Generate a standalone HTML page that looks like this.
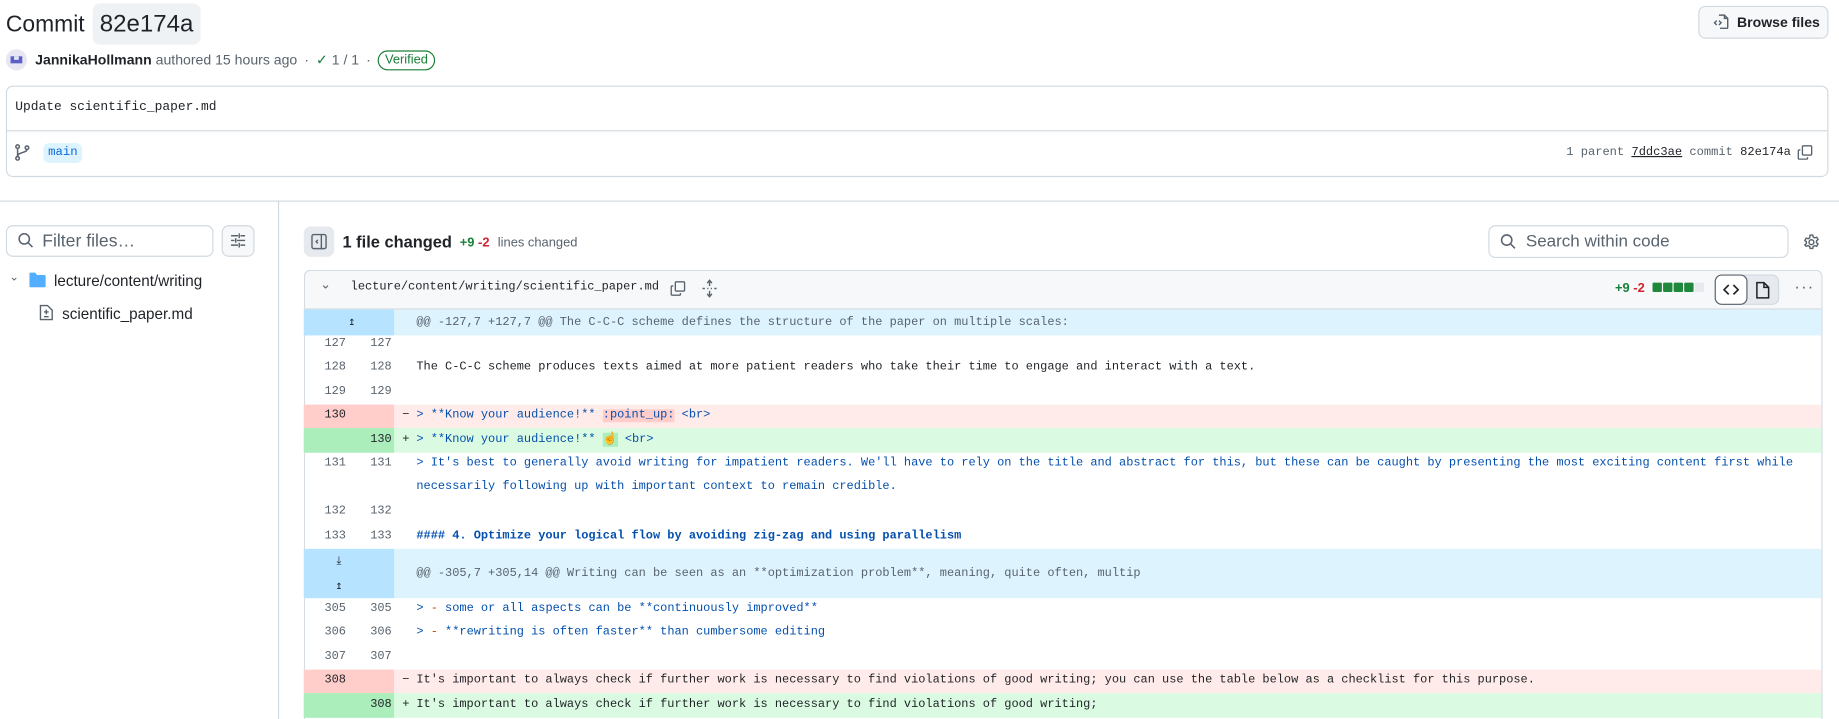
<!DOCTYPE html>
<html><head><meta charset="utf-8"><style>
*{box-sizing:border-box;margin:0;padding:0}
body{width:1839px;height:719px;overflow:hidden;background:#fff;font-family:"Liberation Sans",sans-serif;color:#1f2328}
#w{position:relative;width:1568px;height:613px;transform:scale(1.17283);transform-origin:0 0;overflow:hidden}
.a{position:absolute;white-space:nowrap}
.mono{font-family:"Liberation Mono",monospace}
.row{position:absolute;left:259px;width:1294px;font-family:"Liberation Mono",monospace;font-size:10.2px;display:flex;align-items:center}
.n1,.n2{position:absolute;top:0;height:100%;color:#59636e;font-size:10.2px;text-align:right;display:flex;align-items:center;justify-content:flex-end}
.n1{left:0;width:36px}.n2{left:36px;width:39px}
.gut{position:absolute;left:0;top:0;width:77px;height:100%}
.code{position:absolute;left:96px;top:0;height:100%;display:flex;align-items:center;white-space:pre}
.mk{position:absolute;left:84px;top:0;height:100%;display:flex;align-items:center}
.b{color:#0550ae}
.hk{color:#59636e;font-size:10.2px}
</style></head><body><div id="w">
<div class="a" style="left:5px;top:8px;font-size:19.5px;line-height:26px">Commit</div>
<div class="a" style="left:79px;top:3px;width:92px;height:35px;background:#eff2f5;border-radius:6px;font-size:20.5px;line-height:35px;text-align:center">82e174a</div>
<div class="a" style="left:1448px;top:5px;width:111px;height:28px;border:1px solid #d1d9e0;border-radius:6px;background:#f6f8fa;font-size:12px;font-weight:bold;line-height:26px;padding-left:32px">Browse files</div>
<svg class="a" style="left:1460px;top:11px" width="15" height="15" viewBox="0 0 16 16" fill="none" stroke="#59636e" stroke-width="1.3"><path d="M6 2h5l3 3v8a1 1 0 0 1-1 1H7"/><path d="M11 2v3h3"/><path d="M4 7 2 9l2 2M6 7l2 2-2 2"/></svg>
<div class="a" style="left:5px;top:42px;width:18px;height:18px;border-radius:50%;background:#e6e7f2;overflow:hidden"><div style="position:absolute;left:4px;top:6px;width:10px;height:6px;background:#5b5fc7"></div><div style="position:absolute;left:7px;top:6px;width:4px;height:3px;background:#e6e7f2"></div></div>
<div class="a" style="left:30px;top:42px;height:18px;font-size:12px;line-height:18px;color:#59636e;display:flex;align-items:center;gap:6px"><span><b style="color:#1f2328">JannikaHollmann</b> authored 15 hours ago</span><span>·</span><span><span style="color:#1a7f37">✓</span> 1 / 1</span><span>·</span><span style="border:1px solid #1a7f37;border-radius:10px;color:#1a7f37;font-size:11px;line-height:15px;padding:0 5px">Verified</span></div>
<div class="a" style="left:5px;top:73px;width:1554px;height:78px;border:1px solid #d1d9e0;border-radius:6px"></div>
<div class="a" style="left:6px;top:111px;width:1552px;height:1px;background:#d1d9e0"></div>
<div class="a mono" style="left:13px;top:85px;font-size:11px;line-height:14px">Update scientific_paper.md</div>
<svg class="a" style="left:12px;top:122px" width="14" height="16" viewBox="0 0 14 16" fill="none" stroke="#59636e" stroke-width="1.3"><circle cx="3" cy="3" r="1.5"/><circle cx="3" cy="13" r="1.5"/><circle cx="11" cy="4" r="1.5"/><path d="M3 4.5v7M11 5.5c0 3-8 2-8 6"/></svg>
<div class="a mono" style="left:37px;top:122px;height:17px;padding:0 4px;background:#ddf4ff;color:#0969da;border-radius:5px;font-size:10.5px;line-height:17px">main</div>
<div class="a mono" style="right:41px;top:122px;font-size:10.3px;line-height:17px;color:#59636e">1 parent <span style="color:#1f2328;text-decoration:underline">7ddc3ae</span> commit <span style="color:#1f2328">82e174a</span></div>
<svg class="a" style="left:1532px;top:123px" width="14" height="14" viewBox="0 0 16 16" fill="none" stroke="#59636e" stroke-width="1.3"><rect x="5.5" y="1.5" width="9" height="9" rx="1"/><path d="M3.5 5.5h-1a1 1 0 0 0-1 1v7a1 1 0 0 0 1 1h7a1 1 0 0 0 1-1v-1"/></svg>
<div class="a" style="left:0;top:171px;width:1568px;height:1px;background:#d1d9e0"></div>
<div class="a" style="left:237px;top:171px;width:1px;height:442px;background:#d1d9e0"></div>
<div class="a" style="left:5px;top:192px;width:177px;height:27px;border:1px solid #d1d9e0;border-radius:6px;font-size:15px;line-height:25px;padding-left:30px;color:#59636e">Filter files…</div>
<svg class="a" style="left:15px;top:198px" width="14" height="14" viewBox="0 0 16 16" fill="none" stroke="#59636e" stroke-width="1.5"><circle cx="6.5" cy="6.5" r="5"/><path d="m10.5 10.5 4 4"/></svg>
<div class="a" style="left:189px;top:192px;width:28px;height:27px;border:1px solid #d1d9e0;border-radius:6px;background:#f6f8fa"></div>
<svg class="a" style="left:196px;top:198px" width="14" height="14" viewBox="0 0 14 14" fill="none" stroke="#59636e" stroke-width="1.2"><path d="M1 3h6M9 3h4M8 1v4M1 7h3M6 7h7M5 5v4M1 11h6M9 11h4M8 9v4"/></svg>
<div class="a" style="left:8px;top:231px;font-size:10px;color:#59636e">⌄</div>
<svg class="a" style="left:25px;top:232px" width="14" height="13" viewBox="0 0 14 13"><path d="M0 1.5a1 1 0 0 1 1-1h4l1.5 2H13a1 1 0 0 1 1 1V12a1 1 0 0 1-1 1H1a1 1 0 0 1-1-1z" fill="#54aeff"/></svg>
<div class="a" style="left:46px;top:231px;font-size:13px;line-height:17px">lecture/content/writing</div>
<svg class="a" style="left:33px;top:259px" width="13" height="15" viewBox="0 0 13 15" fill="none" stroke="#59636e" stroke-width="1.2"><path d="M1.5 1.5h6l4 4v8h-10z"/><path d="M6.5 5v4M4.5 7h4M4.5 11h4"/></svg>
<div class="a" style="left:53px;top:259px;font-size:13px;line-height:17px">scientific_paper.md</div>
<div class="a" style="left:259px;top:193px;width:26px;height:26px;background:#e6eaef;border-radius:6px"></div>
<svg class="a" style="left:265px;top:199px" width="14" height="14" viewBox="0 0 14 14" fill="none" stroke="#59636e" stroke-width="1.2"><rect x="1" y="1" width="12" height="12" rx="1.5"/><path d="M9 1v12M6 5.5 4.5 7 6 8.5"/></svg>
<div class="a" style="left:292px;top:198px;font-size:14px;font-weight:bold;line-height:17px">1 file changed</div>
<div class="a" style="left:392px;top:200px;font-size:11px;line-height:14px;font-weight:bold"><span style="color:#1a7f37">+9</span> <span style="color:#d1242f">-2</span> <span style="font-weight:normal;color:#59636e;margin-left:4px">lines changed</span></div>
<div class="a" style="left:1269px;top:192px;width:256px;height:28px;border:1px solid #d1d9e0;border-radius:6px;font-size:14.5px;line-height:26px;padding-left:31px;color:#59636e">Search within code</div>
<svg class="a" style="left:1279px;top:199px" width="14" height="14" viewBox="0 0 16 16" fill="none" stroke="#59636e" stroke-width="1.5"><circle cx="6.5" cy="6.5" r="5"/><path d="m10.5 10.5 4 4"/></svg>
<svg class="a" style="left:1537px;top:199px" width="15" height="15" viewBox="0 0 16 16" fill="none" stroke="#59636e" stroke-width="1.3"><circle cx="8" cy="8" r="2.2"/><path d="M6.8 1.5h2.4l.4 1.8 1.4.8 1.8-.6 1.2 2.1-1.4 1.2v1.6l1.4 1.2-1.2 2.1-1.8-.6-1.4.8-.4 1.8H6.8l-.4-1.8-1.4-.8-1.8.6L2 10.4l1.4-1.2V7.6L2 6.4l1.2-2.1 1.8.6 1.4-.8z"/></svg>
<div class="a" style="left:259px;top:230px;width:1295px;height:384px;border:1px solid #d1d9e0;border-bottom:none;border-radius:6px 6px 0 0;overflow:hidden">
<div style="height:33px;background:#f6f8fa;border-bottom:1px solid #d1d9e0"></div></div>
<div class="a" style="left:273px;top:236px;font-size:11px;color:#59636e">⌄</div>
<div class="a mono" style="left:299px;top:239px;font-size:10.2px;line-height:14px">lecture/content/writing/scientific_paper.md</div>
<svg class="a" style="left:571px;top:239px" width="14" height="14" viewBox="0 0 16 16" fill="none" stroke="#59636e" stroke-width="1.3"><rect x="5.5" y="1.5" width="9" height="9" rx="1"/><path d="M3.5 5.5h-1a1 1 0 0 0-1 1v7a1 1 0 0 0 1 1h7a1 1 0 0 0 1-1v-1"/></svg>
<svg class="a" style="left:598px;top:238px" width="14" height="16" viewBox="0 0 14 16" fill="none" stroke="#59636e" stroke-width="1.2"><path d="M7 1v5M5 3.5 7 1l2 2.5M7 15v-5M5 12.5 7 15l2-2.5M1 8h2M5 8h1M8 8h1M11 8h2"/></svg>
<div class="a" style="left:1377px;top:239px;font-size:11px;font-weight:bold;line-height:14px"><span style="color:#1a7f37">+9</span> <span style="color:#d1242f">-2</span></div>
<div class="a" style="left:1409px;top:241px;display:flex;gap:1px"><i style="width:8px;height:8px;background:#1f883d;border-radius:1px"></i><i style="width:8px;height:8px;background:#1f883d;border-radius:1px"></i><i style="width:8px;height:8px;background:#1f883d;border-radius:1px"></i><i style="width:8px;height:8px;background:#1f883d;border-radius:1px"></i><i style="width:8px;height:8px;background:#e6eaef;border-radius:1px"></i></div>
<div class="a" style="left:1462px;top:234px;width:55px;height:26px;background:#e6eaef;border:1px solid #d1d9e0;border-radius:6px"></div>
<div class="a" style="left:1462px;top:234px;width:28px;height:26px;background:#fff;border:1px solid #59636e;border-radius:6px"></div>
<svg class="a" style="left:1469px;top:241px" width="14" height="12" viewBox="0 0 14 12" fill="none" stroke="#1f2328" stroke-width="1.4"><path d="M5 2 1 6l4 4M9 2l4 4-4 4"/></svg>
<svg class="a" style="left:1497px;top:240px" width="12" height="15" viewBox="0 0 12 15" fill="none" stroke="#1f2328" stroke-width="1.3"><path d="M1 1h6l4 4v9H1z M7 1v4h4"/></svg>
<div class="a" style="left:1530px;top:236px;font-size:14px;color:#59636e;letter-spacing:1px">···</div>
<div class="row" style="top:264px;height:22px;background:#ddf4ff"><div class="gut" style="background:#b6e3ff"></div><div class="n1" style="width:44px;font-size:10px;color:#1f2328">↥</div><div class="code hk">@@ -127,7 +127,7 @@ The C-C-C scheme defines the structure of the paper on multiple scales:</div></div>
<div class="row" style="top:283px;height:20.5px"><div class="n1">127</div><div class="n2">127</div></div>
<div class="row" style="top:303.5px;height:20.5px"><div class="n1">128</div><div class="n2">128</div><div class="code">The C-C-C scheme produces texts aimed at more patient readers who take their time to engage and interact with a text.</div></div>
<div class="row" style="top:324px;height:20.5px"><div class="n1">129</div><div class="n2">129</div></div>
<div class="row" style="top:344.5px;height:20.5px;background:#ffebe9"><div class="gut" style="background:#ffcecb"></div><div class="n1" style="color:#1f2328">130</div><div class="mk">−</div><div class="code b">&gt; **Know your audience!** <span style="background:#ffcecb;color:#0550ae">:point_up:</span> &lt;br&gt;</div></div>
<div class="row" style="top:365px;height:20.5px;background:#dafbe1"><div class="gut" style="background:#aceebb"></div><div class="n2" style="color:#1f2328">130</div><div class="mk">+</div><div class="code b">&gt; **Know your audience!** <span style="background:#aceebb">☝️</span> &lt;br&gt;</div></div>
<div class="row" style="top:385.5px;height:41px;align-items:flex-start"><div class="n1" style="height:20.5px">131</div><div class="n2" style="height:20.5px">131</div><div class="code b" style="display:block;line-height:20.5px">&gt; It's best to generally avoid writing for impatient readers. We'll have to rely on the title and abstract for this, but these can be caught by presenting the most exciting content first while
necessarily following up with important context to remain credible.</div></div>
<div class="row" style="top:426.5px;height:20.5px"><div class="n1">132</div><div class="n2">132</div></div>
<div class="row" style="top:447px;height:21px"><div class="n1">133</div><div class="n2">133</div><div class="code b" style="font-weight:bold">#### 4. Optimize your logical flow by avoiding zig-zag and using parallelism</div></div>
<div class="row" style="top:468px;height:42px;background:#ddf4ff"><div class="gut" style="background:#b6e3ff"></div><div class="n1" style="width:44px;font-size:10px;color:#1f2328;flex-direction:column;align-items:center;justify-content:space-around;padding-left:16px"><span>⤓</span><span>↥</span></div><div class="code hk">@@ -305,7 +305,14 @@ Writing can be seen as an **optimization problem**, meaning, quite often, multip</div></div>
<div class="row" style="top:509px;height:20.5px"><div class="n1">305</div><div class="n2">305</div><div class="code b">&gt; <span style="color:#bc4c00">-</span> some or all aspects can be **continuously improved**</div></div>
<div class="row" style="top:529.5px;height:20.5px"><div class="n1">306</div><div class="n2">306</div><div class="code b">&gt; <span style="color:#bc4c00">-</span> **rewriting is often faster** than cumbersome editing</div></div>
<div class="row" style="top:550px;height:20.5px"><div class="n1">307</div><div class="n2">307</div></div>
<div class="row" style="top:570.5px;height:20.5px;background:#ffebe9"><div class="gut" style="background:#ffcecb"></div><div class="n1" style="color:#1f2328">308</div><div class="mk">−</div><div class="code">It's important to always check if further work is necessary to find violations of good writing; you can use the table below as a checklist for this purpose.</div></div>
<div class="row" style="top:591px;height:20.5px;background:#dafbe1"><div class="gut" style="background:#aceebb"></div><div class="n2" style="color:#1f2328">308</div><div class="mk">+</div><div class="code">It's important to always check if further work is necessary to find violations of good writing;</div></div>
</div></body></html>
